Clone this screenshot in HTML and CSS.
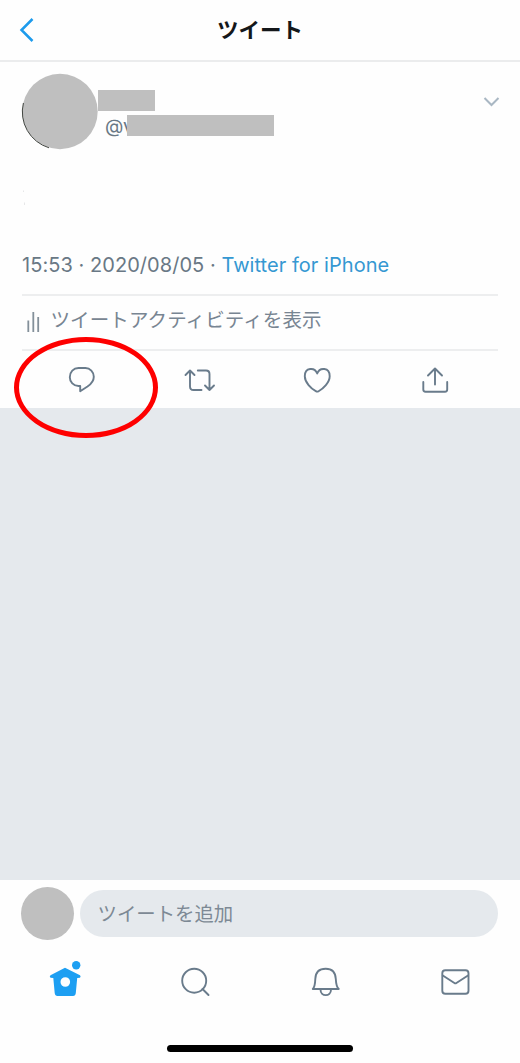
FILE: index.html
```html
<!DOCTYPE html>
<html lang="ja">
<head>
<meta charset="utf-8">
<title>ツイート</title>
<link rel="stylesheet" href="styles.css">
</head>
<body>
<div class="screen">
  <header class="header">
    <svg class="back" width="16" height="26" viewBox="0 0 16 26"><path d="M13.5 2 L2.5 13 L13.5 24"/></svg>
    <h1 class="title">ツイート</h1>
  </header>
  <main class="tweet">
    <section class="author">
      <svg class="avatar" width="76" height="76" viewBox="0 0 76 76"><circle cx="38" cy="37.5" r="37.7"/><path d="M1.4 29A37.5 37.5 0 0 0 27 73.8"/></svg>
      <div class="names">
        <div class="name-mask"></div>
        <div class="handle"><span class="handle-text">@v</span><span class="handle-mask"></span></div>
      </div>
      <svg class="caret" width="18" height="12" viewBox="0 0 18 12"><path d="M2.5 3 L9.5 10 L16.5 3"/></svg>
    </section>
    <svg class="body" width="20" height="101" viewBox="0 0 20 101"><path d="M1.5 40.5V42M2.5 52.5V55"/></svg>
    <p class="meta"><span class="time">15:53 · 2020/08/05 · </span><span class="source">Twitter for iPhone</span></p>
    <div class="activity">
      <svg class="bars" width="16" height="22" viewBox="0 0 16 22"><path d="M2.3 8.5V20M7.3 0V20M12.2 5V20"/></svg>
      <span>ツイートアクティビティを表示</span>
    </div>
    <nav class="actions">
      <div class="action marked">
        <svg class="icon" width="36" height="36" viewBox="0 0 36 36"><path d="M14.5 6H21.5C26 6 29.8 10 29.8 14.7C29.8 19 27.5 21.7 23.5 24.5L16.2 29.3V24H14.5C9.5 24 5.8 20 5.8 15.2C5.8 10 9.5 6 14.5 6Z"/></svg>
        <span class="ring"></span>
      </div>
      <div class="action"><svg class="icon" width="36" height="36" viewBox="0 0 36 36"><path d="M3.5 13L8 8.5L12.5 13M8 8.5V24.5Q8 28 11.5 28H19.5M15.8 8.5H24Q27.5 8.5 27.5 12V28M23 23.5L27.5 28L32 23.5"/></svg></div>
      <div class="action"><svg class="icon" width="36" height="36" viewBox="0 0 36 36"><path d="M18.2 11.5C15.8 5 5.8 5.2 5.8 14.2C5.8 20.5 12.2 26.7 16.8 29.2Q18.2 30 19.6 29.2C24.2 26.7 30.7 20.5 30.7 14.2C30.7 5.2 20.6 5 18.2 11.5Z"/></svg></div>
      <div class="action"><svg class="icon" width="36" height="36" viewBox="0 0 36 36"><path d="M18 22.5V7M11 13.5L18 6.5L25 13.5M6.3 20V27.5Q6.3 29.7 8.5 29.7H28Q30.2 29.7 30.2 27.5V20"/></svg></div>
    </nav>
  </main>
  <div class="replies"></div>
  <footer class="footer">
    <div class="composer">
      <div class="mini-avatar"></div>
      <div class="reply-box">ツイートを追加</div>
    </div>
    <nav class="tabs">
      <div class="tab"><svg width="40" height="40" viewBox="0 0 40 40"><path class="home" fill-rule="evenodd" d="M20 5.8L35 13.2Q36.2 14.5 35 15.8L32.2 16L30.8 31Q30.5 34 28 34H12.5Q10 34 9.7 31L8.3 16L5.5 15.8Q4 14.5 5.5 13.2ZM20.3 15.2A4.8 4.8 0 1 0 20.3 24.8A4.8 4.8 0 1 0 20.3 15.2Z"/><circle class="home" cx="31.2" cy="3.2" r="4.2"/></svg></div>
      <div class="tab"><svg class="icon" width="40" height="40" viewBox="0 0 40 40"><circle cx="19.2" cy="18.7" r="12"/><path d="M27.5 27L33.5 33"/></svg></div>
      <div class="tab"><svg class="icon" width="40" height="40" viewBox="0 0 40 40"><path d="M7.8 27Q10 25 10.3 17C10.5 10.5 14 6.7 20.7 6.7C27.5 6.7 30.5 10.5 30.8 17Q31.2 25 33.8 27ZM15.5 27.5C15.5 35 26 35 26 27.5"/></svg></div>
      <div class="tab"><svg class="icon" width="40" height="40" viewBox="0 0 40 40"><rect x="7.3" y="8.3" width="26.2" height="23.5" rx="3"/><path d="M7.8 13.5L19.4 21Q20.4 21.7 21.4 21L33 13.5"/></svg></div>
    </nav>
    <div class="home-bar"></div>
  </footer>
</div>
</body>
</html>
```
FILE: styles.css
```css
* { box-sizing: border-box; }
body { margin: 0; background: #fefefe; font-family: Inter, "Noto Sans CJK JP", sans-serif; color: #697885; }
.screen { width: 520px; height: 1063px; display: flex; flex-direction: column; overflow: hidden; }
svg { display: block; overflow: visible; fill: none; flex: none; }
.header { height: 62px; flex: none; border-bottom: 2px solid #ebeced; display: grid; grid-template-columns: 60px 1fr 60px; align-items: center; }
.back { margin-left: 19px; stroke: #1d9bec; stroke-width: 2.5; }
.title { margin: 0; text-align: center; color: #14171a; font-size: 21.5px; font-weight: 700; line-height: 30px; }
.tweet { height: 346px; flex: none; padding: 12px 22px 0; display: flex; flex-direction: column; }
.author { display: flex; height: 76px; flex: none; }
.avatar circle { fill: #bfbfbf; }
.avatar path { stroke: #30342f; stroke-width: 0.9; }
.names { flex: 1; padding-top: 16px; }
.name-mask { width: 57px; height: 21px; background: #bfbfbf; }
.handle { display: flex; height: 21px; margin-top: 4px; padding-left: 7px; }
.handle-text { width: 22px; font-size: 19px; line-height: 23px; white-space: nowrap; letter-spacing: -0.4px; }
.handle-mask { width: 147px; background: #bfbfbf; position: relative; }
.caret { margin: 21px -2px 0 0; stroke: #a9b7c3; stroke-width: 2; }
.body { stroke: #e6e7e8; stroke-width: 1; }
.meta { margin: 0; height: 28px; flex: none; font-size: 20px; line-height: 28px; letter-spacing: 0.05px; white-space: pre; }
.source { color: #3598d2; }
.activity { margin-top: 15px; height: 57px; flex: none; border-top: 2px solid #edeeef; border-bottom: 2px solid #edeeef; display: flex; align-items: center; gap: 8.5px; padding-left: 4px; font-size: 19.5px; line-height: 28px; }
.activity span { padding-bottom: 5px; white-space: nowrap; letter-spacing: 0.1px; color: #788592; }
.bars { stroke: #84909a; stroke-width: 1.8; }
.actions { display: grid; grid-template-columns: repeat(4, 117.8px); margin-left: 1px; padding-top: 11px; }
.action { display: flex; justify-content: center; position: relative; }
.icon { stroke: #697b8b; stroke-width: 1.9; stroke-linecap: round; stroke-linejoin: round; }
.ring { position: absolute; left: -9px; top: -25px; width: 144px; height: 101px; border: 5px solid #fe0000; border-radius: 50%; }
.replies { height: 472px; flex: none; background: #e5e9ed; }
.footer { height: 183px; flex: none; display: flex; flex-direction: column; }
.composer { display: flex; align-items: center; gap: 6px; padding: 7px 22px 0 21px; }
.mini-avatar { width: 53px; height: 53px; border-radius: 50%; background: #bfbfbf; flex: none; }
.reply-box { flex: 1; height: 47px; border-radius: 24px; background: #e5e9ed; padding-left: 17.5px; font-size: 19.4px; line-height: 48px; color: #7d8995; }
.tabs { display: grid; grid-template-columns: repeat(4, 130px); padding-top: 22px; }
.tab { display: flex; justify-content: center; }
.home { fill: #1d9ff2; }
.home-bar { width: 186px; height: 7px; border-radius: 4px; background: #000; margin: 43px auto 0; }
```
